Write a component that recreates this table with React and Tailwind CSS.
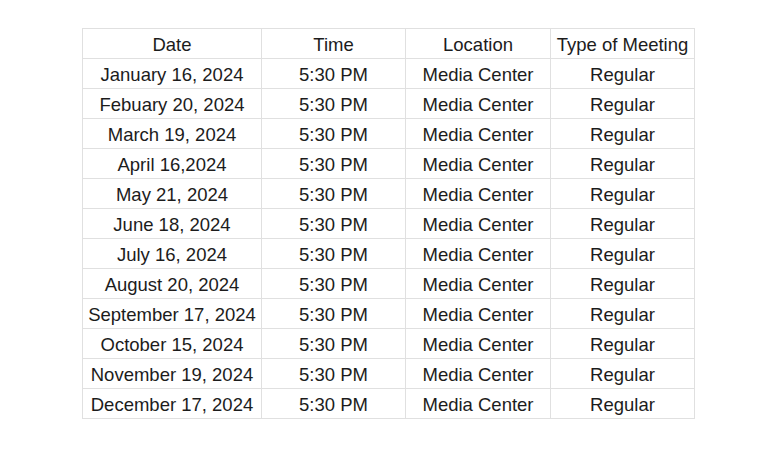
import React from "react";

const dates = [
  "January 16, 2024",
  "Febuary 20, 2024",
  "March 19, 2024",
  "April 16,2024",
  "May 21, 2024",
  "June 18, 2024",
  "July 16, 2024",
  "August 20, 2024",
  "September 17, 2024",
  "October 15, 2024",
  "November 19, 2024",
  "December 17, 2024",
];

export default function App() {
  const cell = "border border-[#e0e0e0] p-0 pt-[2px] text-center align-middle whitespace-nowrap leading-[27px]";
  return (
    <div className="w-[768px] h-[453px] bg-white pt-[28px] pl-[82px]" style={{ fontFamily: '"Liberation Sans", Arial, sans-serif' }}>
      <table className="border-collapse text-[18.5px] text-[#1c1c1c]" style={{ tableLayout: "fixed" }}>
        <colgroup>
          <col className="w-[179px]" />
          <col className="w-[144px]" />
          <col className="w-[145px]" />
          <col className="w-[144px]" />
        </colgroup>
        <tbody>
          <tr>
            <td className={cell}>Date</td>
            <td className={cell}>Time</td>
            <td className={cell}>Location</td>
            <td className={cell}>Type of Meeting</td>
          </tr>
          {dates.map((d) => (
            <tr key={d}>
              <td className={cell}>{d}</td>
              <td className={cell}>5:30 PM</td>
              <td className={cell}>Media Center</td>
              <td className={cell}>Regular</td>
            </tr>
          ))}
        </tbody>
      </table>
    </div>
  );
}
